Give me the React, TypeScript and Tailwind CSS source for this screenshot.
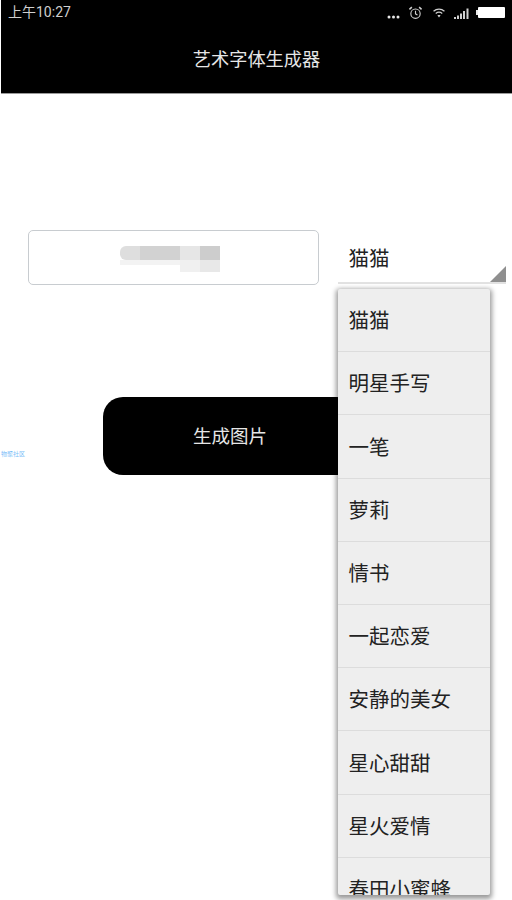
// Art font generator screen with the font dropdown open
const FONTS = ['猫猫', '明星手写', '一笔', '萝莉', '情书', '一起恋爱', '安静的美女', '星心甜甜', '星火爱情', '春田小蜜蜂']

const cjk = "font-['Roboto','Noto_Sans_CJK_SC',sans-serif]"

function StatusIcons() {
    return (
        <div className="flex items-center">
            <svg className="mt-[9px]" width="13" height="6" viewBox="0 0 13 6" fill="#e8e8e8">
                <circle cx="2" cy="3" r="1.5" />
                <circle cx="6.5" cy="3" r="1.5" />
                <circle cx="11" cy="3" r="1.5" />
            </svg>
            {/* alarm clock */}
            <svg className="ml-[8px] mt-[1px]" width="15" height="14" viewBox="0 0 15 15" fill="none" stroke="#d0d0d0" strokeWidth="1.2">
                <circle cx="7.5" cy="8.2" r="5" />
                <path d="M7.5 5.2 V8.4 L9.6 9.6" />
                <path d="M1 3.6 L3.6 1.2 M14 3.6 L11.4 1.2" strokeWidth="1.6" />
            </svg>
            {/* wifi */}
            <svg className="ml-[9px] mt-[1px]" width="14" height="10" viewBox="0 0 14 11" fill="none" stroke="#d0d0d0" strokeWidth="1.3">
                <path d="M1 3.6 C4.5 0.4 9.5 0.4 13 3.6" />
                <path d="M3.4 6 C5.6 4.2 8.4 4.2 10.6 6" />
                <path d="M7 10.4 L5.3 8.2 C6.3 7.5 7.7 7.5 8.7 8.2 Z" fill="#d0d0d0" stroke="none" />
            </svg>
            {/* signal */}
            <svg className="ml-[8px] mt-[2px]" width="16" height="11" viewBox="0 0 16 11" fill="#d0d0d0">
                <rect x="0" y="9" width="2" height="2" />
                <rect x="3" y="7.5" width="2" height="3.5" />
                <rect x="6" y="5.5" width="2" height="5.5" />
                <rect x="9" y="3" width="2" height="8" />
                <rect x="12.5" y="0.5" width="2" height="10.5" />
            </svg>
            {/* battery */}
            <div className="ml-[6px] mt-[1px] flex items-center">
                <div className="w-[2px] h-[5px] bg-[#e8e8e8]" />
                <div className="w-[27px] h-[11px] bg-white rounded-[1px]" />
            </div>
        </div>
    )
}

export default function App() {
    return (
        <div className={`relative w-[512px] h-[900px] overflow-hidden bg-white ${cjk}`}>
            {/* Header */}
            <div className="ml-px h-[94px] bg-black border-b border-[#9a9a9a]">
                <div className="flex items-center justify-between h-[24px] pl-[7px] pr-[7px]">
                    <span className="text-[14px] leading-none text-[#cfcfcf]">上午10:27</span>
                    <StatusIcons />
                </div>
                <div className="flex justify-center h-[69px] pt-[9px] text-[18.2px] leading-[54px] text-[#e6e6e6]">
                    <span>艺术字体生成器</span>
                </div>
            </div>

            {/* Form row */}
            <div className="flex mt-[136px] pl-[28px]">
                <div className="flex items-center justify-center w-[291px] h-[55px] border-[1.5px] border-[#c8ccd0] rounded-[5px] bg-white">
                    {/* blurred-out text */}
                    <div className="flex flex-col w-[100px] mr-[8px] mt-[2px]">
                        <div className="flex h-[14px]">
                            <div className="w-[20px] bg-[#dedede] rounded-l-[6px]" />
                            <div className="w-[40px] bg-[#d2d2d2]" />
                            <div className="w-[20px] bg-[#e6e6e6]" />
                            <div className="w-[20px] bg-[#cdcdcd]" />
                        </div>
                        <div className="flex h-[12px]">
                            <div className="w-[60px] h-[5px] bg-[#f3f3f3]" />
                            <div className="w-[20px] bg-[#f0f0f0]" />
                            <div className="w-[20px] bg-[#e8e8e8]" />
                        </div>
                    </div>
                </div>
                <div className="relative ml-[19px] w-[168px] h-[54px] border-b-2 border-[#e2e2e2] pl-[10.5px] pt-[14px]">
                    <span className="text-[20.5px] leading-[30px] text-[#222222]">猫猫</span>
                    <div className="absolute right-0 bottom-0 w-0 h-0 border-l-[16px] border-l-transparent border-b-[16px] border-b-[#8f8f8f]" />
                </div>
            </div>

            {/* Generate button */}
            <div className="flex mt-[112px]">
                <span className="self-end mb-[17px] ml-px w-[102px] text-[6px] leading-[8px] text-[#7cc0f8]">物聚社区</span>
                <div className="flex items-center justify-center w-[254px] h-[78px] bg-black rounded-[20px] text-[18.5px] text-[#e6e6e6]">
                    <span className="mt-[3px]">生成图片</span>
                </div>
            </div>

            {/* Open dropdown */}
            <ul className="absolute left-[338px] top-[289px] w-[152px] h-[606px] overflow-hidden bg-[#eeeeee] rounded-[2px] shadow-[0_2px_5px_2px_rgba(0,0,0,0.4)]">
                {FONTS.map((name, i) => (
                    <li
                        key={name}
                        className={`flex items-center h-[63.2px] pl-[10.5px] pt-[3px] text-[20.5px] text-[#222222] whitespace-nowrap ${i < FONTS.length - 1 ? 'border-b border-[#dcdcdc]' : ''}`}
                    >
                        {name}
                    </li>
                ))}
            </ul>
        </div>
    )
}
